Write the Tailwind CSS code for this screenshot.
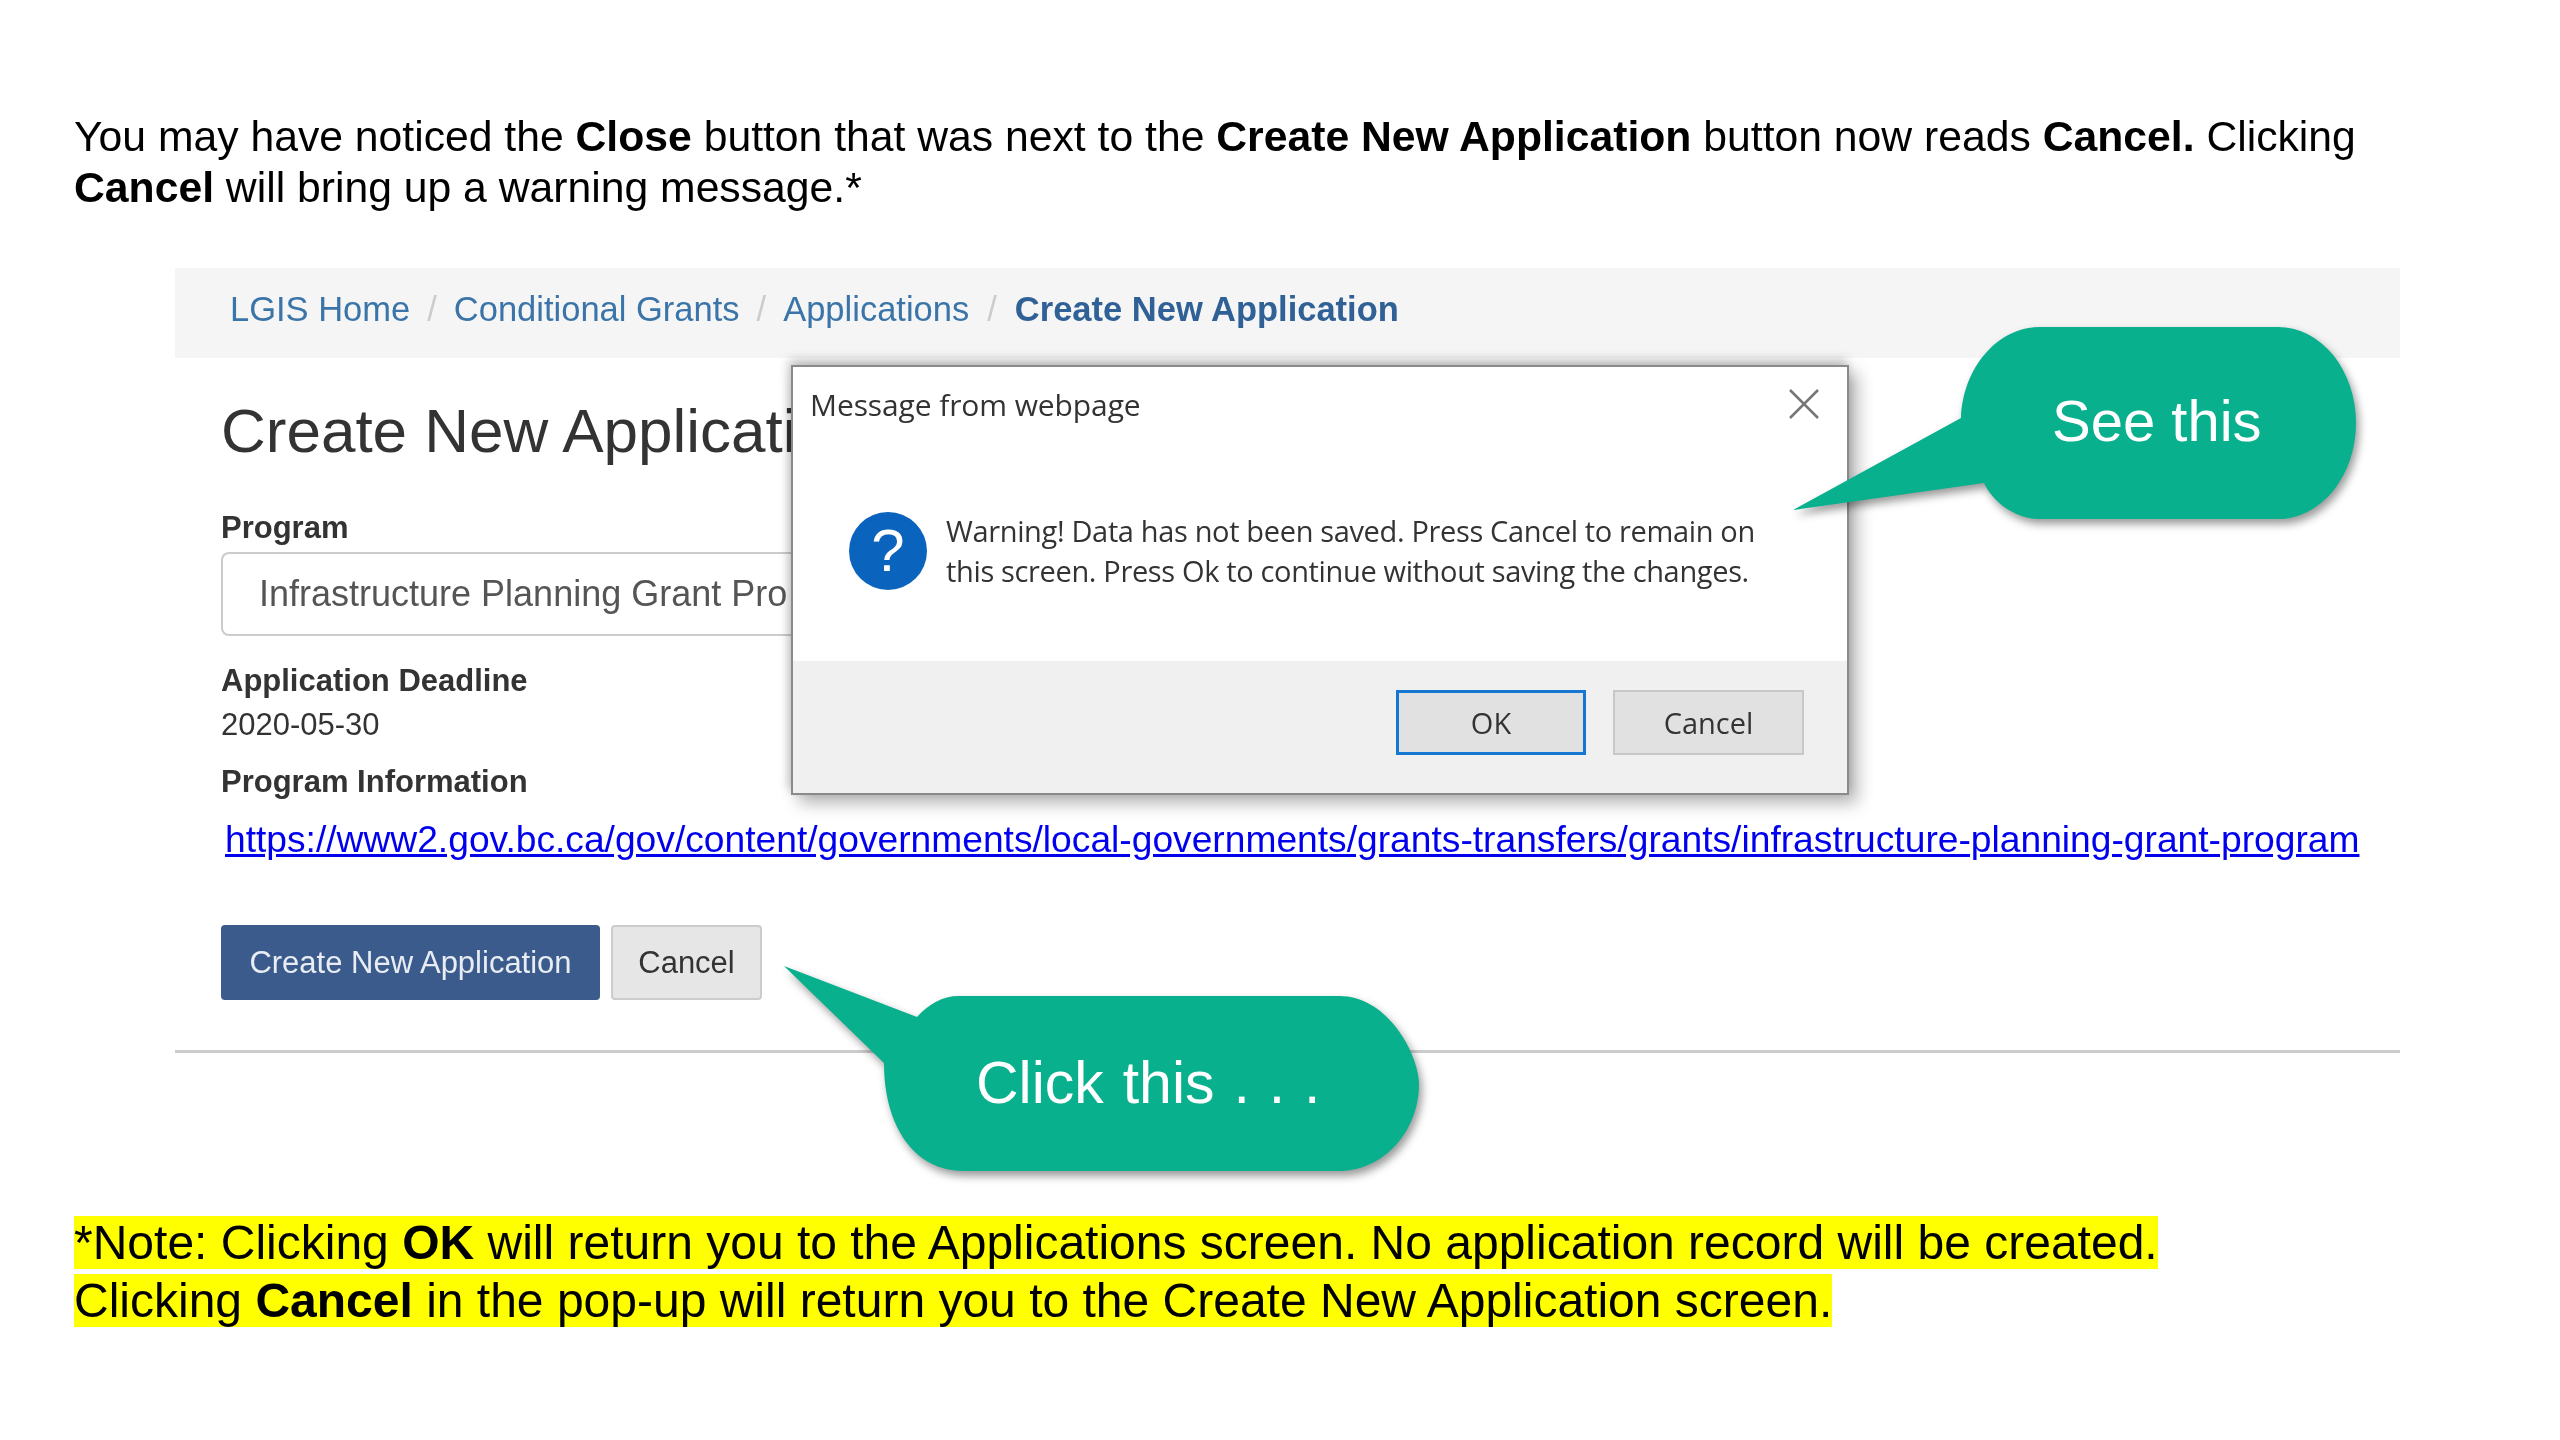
<!DOCTYPE html>
<html lang="en">
	<head>
		<meta charset="UTF-8" />
		<meta name="viewport" content="width=device-width, initial-scale=1.0" />
		<title>Create New Application - Cancel warning</title>
		<script src="https://cdn.jsdelivr.net/npm/@tailwindcss/browser@4"></script>
	</head>
	<body class="bg-white min-h-screen font-['Liberation_Sans',Arial,sans-serif] text-black">
		<!-- Intro text -->
		<p class="pt-[111px] pl-[74px] text-[42.7px] leading-[51px] whitespace-nowrap blur-[0.4px]">
			You may have noticed the <b>Close</b> button that was next to the <b>Create New Application</b> button now reads <b>Cancel.</b> Clicking<br />
			<b>Cancel</b> will bring up a warning message.*
		</p>

		<!-- Screenshot panel -->
		<div class="relative mt-[55px] ml-[175px] w-[2225px]">
			<div class="blur-[0.5px]">
				<nav class="h-[90px] bg-[#f5f5f5] pl-[55px] pb-[6px] flex items-center text-[34.5px] text-[#3a74a8] whitespace-nowrap">
					<span>LGIS Home</span>
					<span class="mx-[17px] text-[#ccc]">/</span>
					<span>Conditional Grants</span>
					<span class="mx-[17px] text-[#ccc]">/</span>
					<span>Applications</span>
					<span class="mx-[18px] text-[#ccc]">/</span>
					<span class="font-bold text-[#2f6096]">Create New Application</span>
				</nav>

				<div class="pl-[46px] pt-[41px] text-[#333]">
					<h1 class="text-[62px] leading-[64px] whitespace-nowrap">Create New Applicati</h1>
					<div class="mt-[47px] text-[31px] leading-[36px] font-bold">Program</div>
					<div class="mt-[6px] w-[571px] h-[84px] border-2 border-r-0 border-[#ccc] rounded-l-lg flex items-center pl-[36px] text-[36px] text-[#555] whitespace-nowrap">Infrastructure Planning Grant Pro</div>
					<div class="mt-[27px] text-[31px] leading-[36px] font-bold">Application Deadline</div>
					<div class="mt-[8px] text-[31px] leading-[36px]">2020-05-30</div>
					<div class="mt-[21px] text-[31px] leading-[36px] font-bold">Program Information</div>
					<a href="#" class="block mt-[19px] ml-[4px] text-[37.2px] leading-[40px] text-[#0000ee] underline whitespace-nowrap">https://www2.gov.bc.ca/gov/content/governments/local-governments/grants-transfers/grants/infrastructure-planning-grant-program</a>
					<div class="mt-[66px] flex gap-[11px] text-[31px]">
						<button class="w-[379px] h-[75px] pt-[2px] rounded bg-[#3b5b8c] text-[#e8edf3]">Create New Application</button>
						<button class="w-[151px] h-[75px] pt-[2px] rounded bg-[#e6e6e6] border-2 border-[#ccc] text-[#333]">Cancel</button>
					</div>
				</div>
				<div class="mt-[50px] h-[3px] bg-[#ccc]"></div>
			</div>

			<!-- Browser dialog -->
			<div class="absolute left-[616px] top-[97px] w-[1058px] h-[430px] bg-white border-2 border-[#8a8a8a] shadow-[8px_8px_16px_rgba(0,0,0,0.3),-2px_-5px_10px_rgba(0,0,0,0.25)] flex flex-col font-['Open_Sans',sans-serif] text-[#333] blur-[0.4px]">
				<div class="h-[294px] relative">
					<div class="pl-[17px] pt-[19px] text-[30px] leading-[38px] tracking-[-0.1px]">Message from webpage</div>
					<svg class="absolute right-[27px] top-[21px] w-[32px] h-[32px]" viewBox="0 0 32 32" fill="none" stroke="#777" stroke-width="2.5"><path d="M2 2 L30 30 M30 2 L2 30" /></svg>
					<div class="mt-[87px] ml-[56px] flex items-center gap-[19px]">
						<div class="w-[78px] h-[78px] rounded-full bg-[#0a63bd] text-white flex items-center justify-center text-[60px] leading-none font-['Liberation_Sans',sans-serif]">?</div>
						<div class="text-[29px] leading-[40px] tracking-[-0.35px] whitespace-nowrap">Warning! Data has not been saved. Press Cancel to remain on<br />this screen. Press Ok to continue without saving the changes.</div>
					</div>
				</div>
				<div class="flex-1 bg-[#f0f0f0] flex items-start justify-end gap-[27px] pt-[29px] pr-[43px] text-[29px]">
					<button class="w-[190px] h-[65px] bg-[#e1e1e1] border-[3px] border-[#1577d2]">OK</button>
					<button class="w-[191px] h-[65px] bg-[#e1e1e1] border-2 border-[#c8c8c8]">Cancel</button>
				</div>
			</div>

			<!-- See this callout -->
			<div class="absolute left-[1618px] top-[59px] w-[563px] h-[192px]">
				<svg class="absolute left-0 top-0 drop-shadow-[3px_5px_4px_rgba(0,0,0,0.4)]" width="563" height="192" viewBox="0 0 563 192"><path fill="#08b08e" d="M247 0 H485 A78 96 0 0 1 563 96 A78 96 0 0 1 485 192 H247 C222 192 200 175 191 156 L0 183 L168 91 C170 40 205 0 247 0 Z" /></svg>
				<div class="absolute left-[259px] top-[62px] text-[58px] leading-[64px] text-white whitespace-nowrap">See this</div>
			</div>

			<!-- Click this callout -->
			<div class="absolute left-[609px] top-[698px] w-[635px] h-[205px]">
				<svg class="absolute left-0 top-0 drop-shadow-[3px_5px_4px_rgba(0,0,0,0.4)]" width="635" height="205" viewBox="0 0 635 205"><path fill="#08b08e" d="M133 51 C145 38 158 30 175 30 H555 C605 30 635 90 635 118 C635 165 600 205 555 205 H180 C130 205 100 160 100 97 L0 0 Z" /></svg>
				<div class="absolute left-[192px] top-[85px] text-[59px] leading-[64px] text-white whitespace-nowrap [word-spacing:2.5px]">Click this . . .</div>
			</div>
		</div>

		<!-- Note -->
		<p class="mt-[161px] pl-[74px] text-[48px] leading-[58px] whitespace-nowrap blur-[0.4px]">
			<span class="bg-[#ffff00]">*Note: Clicking <b>OK</b> will return you to the Applications screen. No application record will be created.</span><br />
			<span class="bg-[#ffff00]">Clicking <b>Cancel</b> in the pop-up will return you to the Create New Application screen.</span>
		</p>
	</body>
</html>
